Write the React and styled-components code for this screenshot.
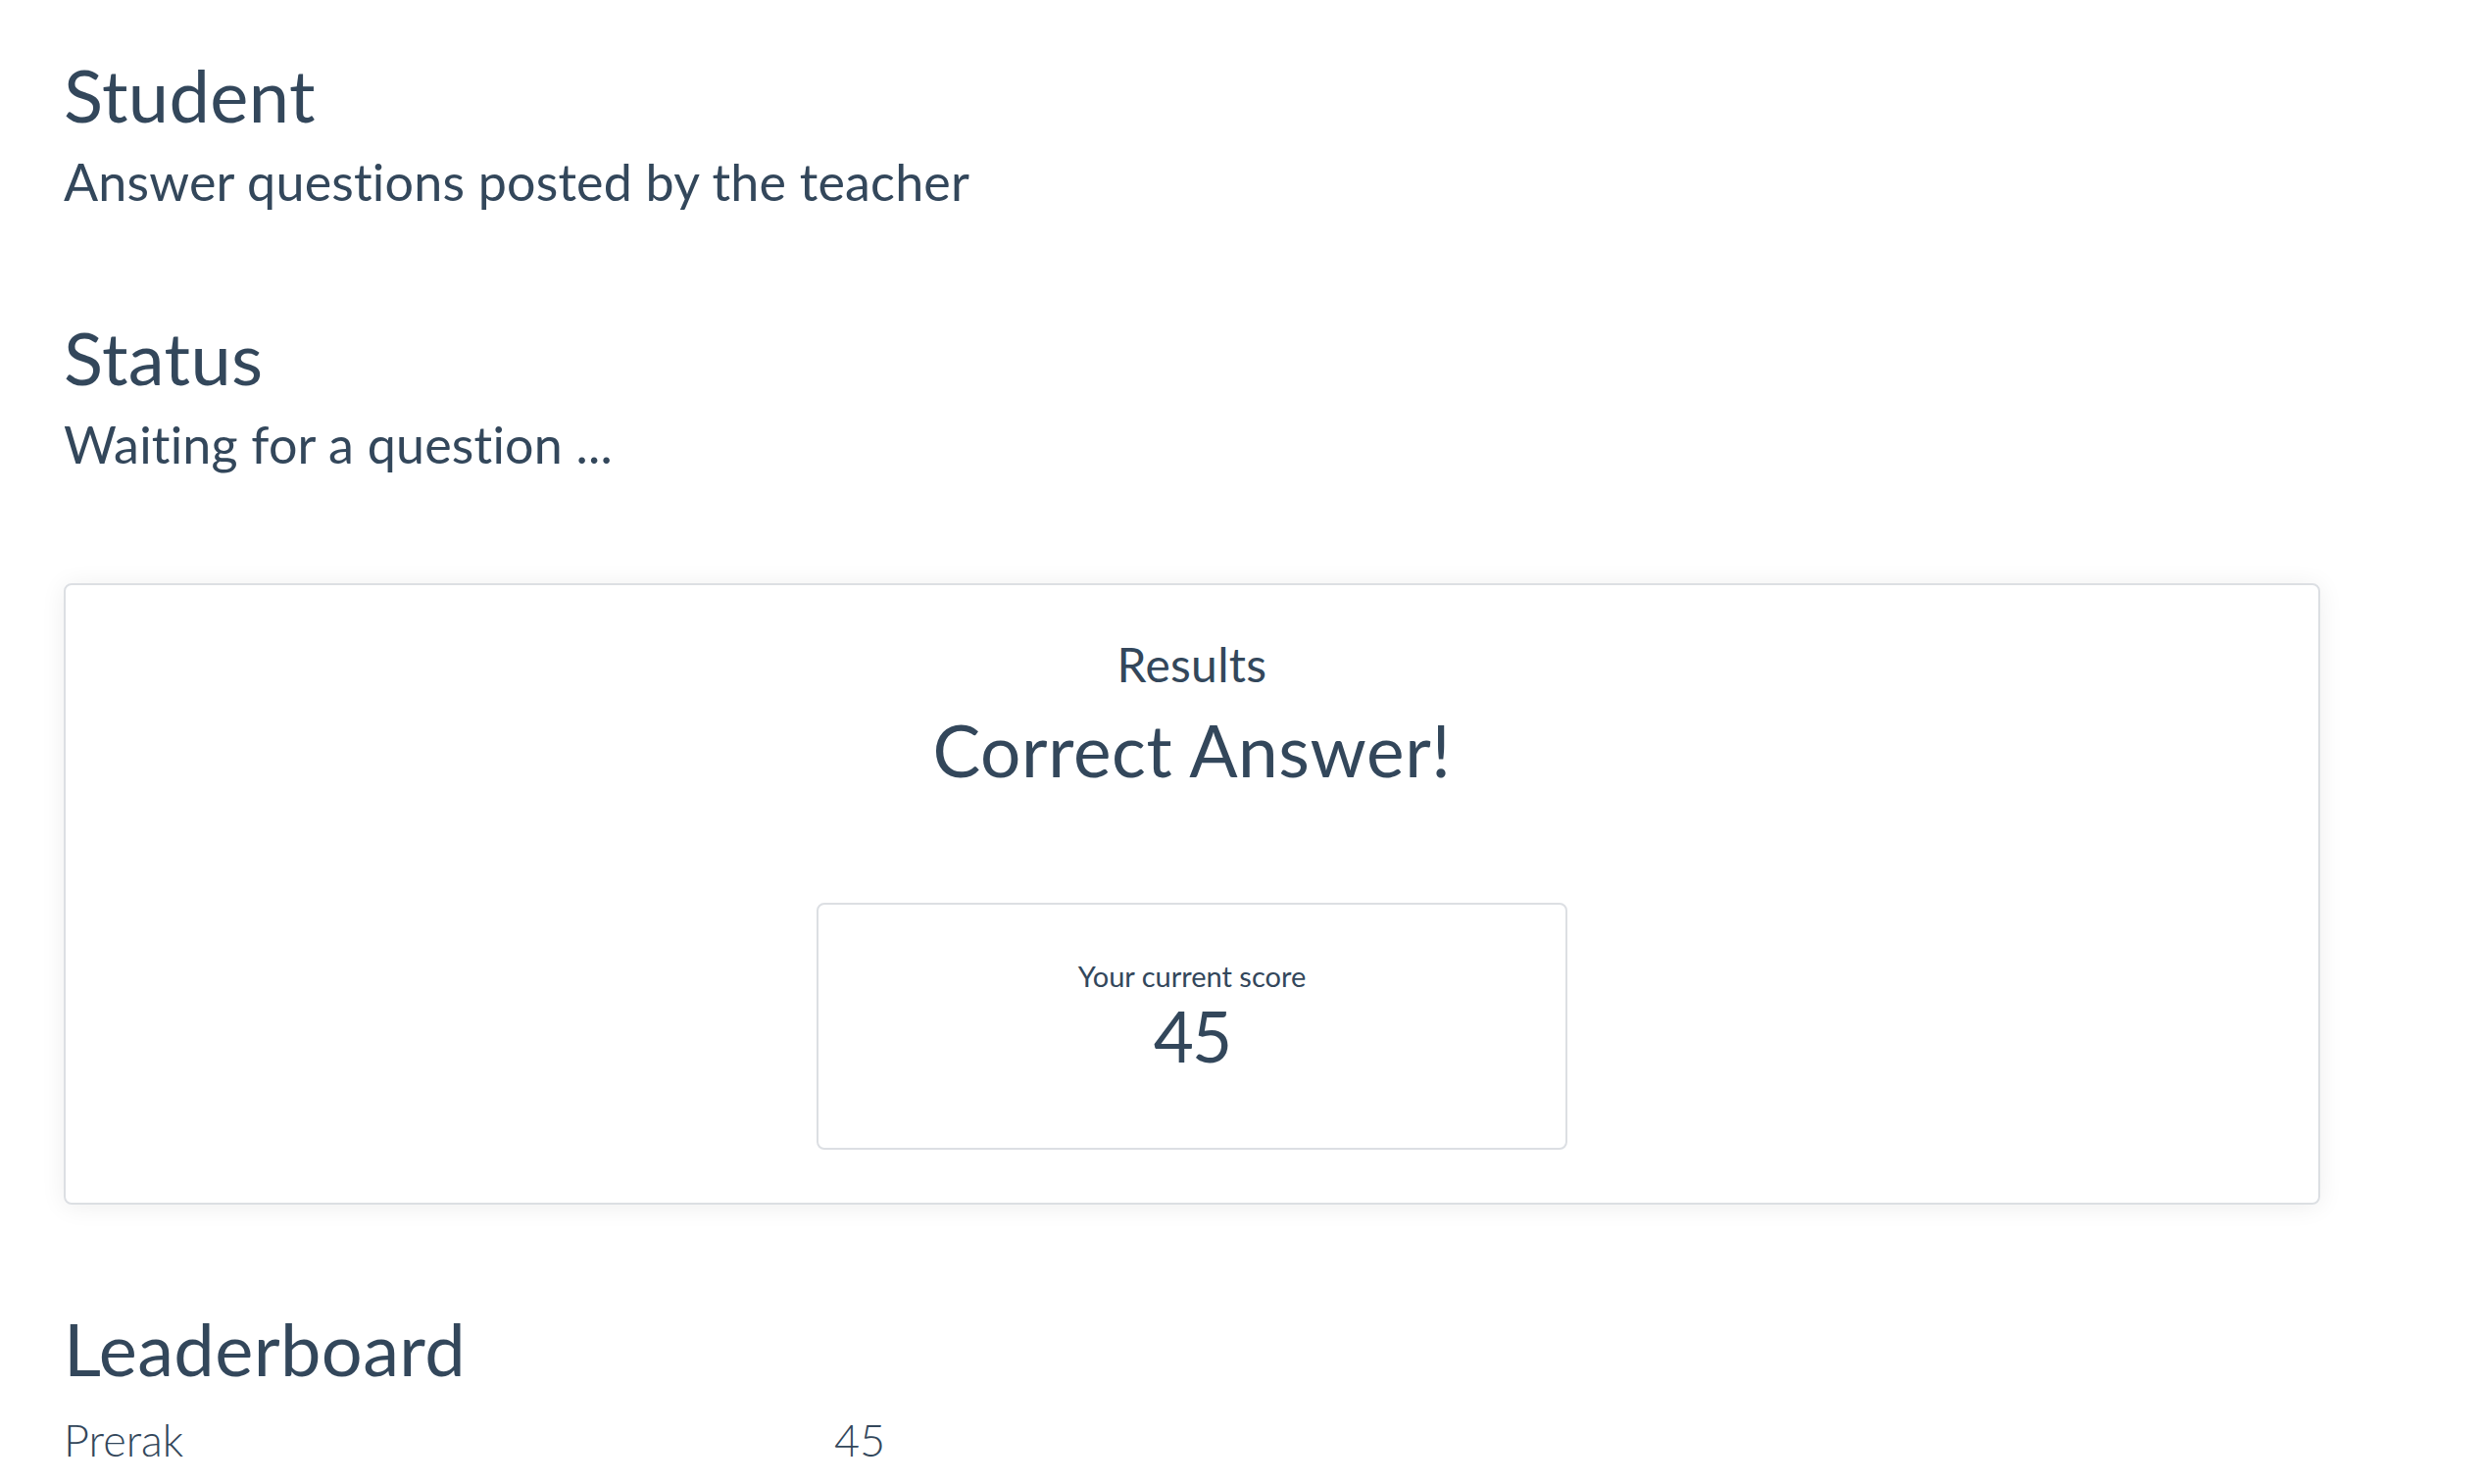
import styled, { createGlobalStyle } from 'styled-components';

const GlobalStyle = createGlobalStyle`
  html, body {
    margin: 0;
    padding: 0;
    background: #ffffff;
  }
  body {
    font-family: Lato, 'Open Sans', 'Liberation Sans', sans-serif;
    color: #33475b;
    font-variant-ligatures: none;
  }
`;

const Page = styled.main`
  padding: 52px 163px 40px 65px;
`;

const Section = styled.section`
  margin-bottom: ${(p) => p.gap || 0}px;
`;

const Heading = styled.h1`
  margin: 0;
  font-size: 74px;
  line-height: 89px;
  font-weight: 400;
  letter-spacing: 0.4px;
`;

const Lead = styled.p`
  margin: 13px 0 0;
  font-size: 52px;
  line-height: 62px;
  font-weight: 400;
  letter-spacing: 0.2px;
`;

const ResultCard = styled.div`
  border: 2px solid #dcdfe3;
  border-radius: 8px;
  box-shadow: 0 2px 26px rgba(0, 0, 0, 0.07);
  padding: 52px 0 54px;
  display: flex;
  flex-direction: column;
  align-items: center;
  text-align: center;
  margin-bottom: 102px;
`;

const ResultLabel = styled.div`
  font-size: 48px;
  line-height: 58px;
  letter-spacing: 0.3px;
`;

const ResultText = styled.div`
  margin-top: 14px;
  font-size: 73px;
  line-height: 88px;
  letter-spacing: 0.6px;
`;

const ScoreBox = styled.div`
  margin-top: 112px;
  width: 766px;
  box-sizing: border-box;
  border: 2px solid #dcdfe3;
  border-radius: 8px;
  padding: 55px 0 70px;
  display: flex;
  flex-direction: column;
  align-items: center;
`;

const ScoreLabel = styled.div`
  font-size: 29px;
  line-height: 35px;
`;

const ScoreValue = styled.div`
  font-size: 71px;
  line-height: 88px;
  letter-spacing: -2px;
`;

const Board = styled.div`
  margin-top: 22px;
`;

const BoardRow = styled.div`
  display: grid;
  grid-template-columns: 786px auto;
  font-size: 45px;
  line-height: 54px;
  font-weight: 300;
`;

const leaders = [{ name: 'Prerak', score: 45 }];

export default function App() {
  return (
    <>
      <GlobalStyle />
      <Page>
        <Section gap={104}>
          <Heading>Student</Heading>
          <Lead>Answer questions posted by the teacher</Lead>
        </Section>
        <Section gap={111}>
          <Heading>Status</Heading>
          <Lead>Waiting for a question ...</Lead>
        </Section>
        <ResultCard>
          <ResultLabel>Results</ResultLabel>
          <ResultText>Correct Answer!</ResultText>
          <ScoreBox>
            <ScoreLabel>Your current score</ScoreLabel>
            <ScoreValue>45</ScoreValue>
          </ScoreBox>
        </ResultCard>
        <Section>
          <Heading>Leaderboard</Heading>
          <Board>
            {leaders.map((l) => (
              <BoardRow key={l.name}>
                <span>{l.name}</span>
                <span>{l.score}</span>
              </BoardRow>
            ))}
          </Board>
        </Section>
      </Page>
    </>
  );
}
